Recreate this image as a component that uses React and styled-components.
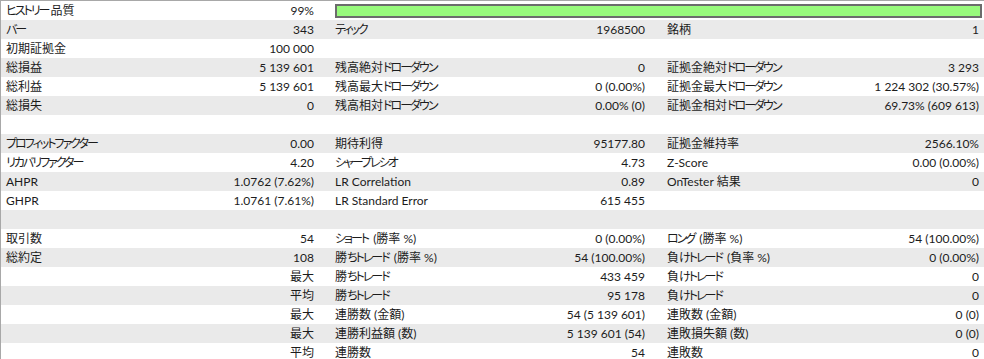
import React from 'react';
import styled, { createGlobalStyle } from 'styled-components';

const GlobalStyle = createGlobalStyle`
  html, body {
    margin: 0;
    padding: 0;
    background: #ffffff;
  }
  body {
    font-family: Lato, 'Noto Sans CJK JP', sans-serif;
    font-size: 12px;
    color: #1c1c1c;
    font-feature-settings: 'palt' 1;
  }
`;

const Table = styled.div`
  width: 984px;
  height: 359px;
  overflow: hidden;
  box-sizing: border-box;
  border-top: 1px solid #a8a8a8;
  border-left: 1px solid #a8a8a8;
`;

const Row = styled.div`
  display: grid;
  grid-template-columns: 329px 331px 323px;
  height: 19px;
  background: ${({ $shaded }) => ($shaded ? '#eaeaea' : '#ffffff')};
`;

const Cell = styled.div`
  display: flex;
  align-items: center;
  justify-content: space-between;
  padding: ${({ $last }) => ($last ? '0 5px 0 6px' : '0 16px 0 5px')};
  line-height: 19px;
  white-space: nowrap;
  min-width: 0;
`;

const Label = styled.span``;

const Kana = styled.span`
  letter-spacing: -2px;
  margin-right: 2px;
`;

const Value = styled.span`
  text-align: right;
`;

const BarCell = styled.div`
  grid-column: 2 / 4;
  display: flex;
  align-items: center;
  padding: 0 2px 0 5px;
`;

const QualityBar = styled.div`
  flex: 1;
  height: 14px;
  box-sizing: border-box;
  border: 2px solid #6c6c6c;
  background: #98fa7c;
`;

// kana in the reference font is narrower than in Noto Sans CJK, so tighten those runs
const renderText = (text) =>
  text.split(/([\u3040-\u30ff]+)/).map((part, k) =>
    /[\u3040-\u30ff]/.test(part) ? <Kana key={k}>{part}</Kana> : part
  );

const rows = [
  [['ヒストリー品質', '99%'], 'bar'],
  [['バー', '343'], ['ティック', '1968500'], ['銘柄', '1']],
  [['初期証拠金', '100 000'], ['', ''], ['', '']],
  [['総損益', '5 139 601'], ['残高絶対ドローダウン', '0'], ['証拠金絶対ドローダウン', '3 293']],
  [['総利益', '5 139 601'], ['残高最大ドローダウン', '0 (0.00%)'], ['証拠金最大ドローダウン', '1 224 302 (30.57%)']],
  [['総損失', '0'], ['残高相対ドローダウン', '0.00% (0)'], ['証拠金相対ドローダウン', '69.73% (609 613)']],
  [['', ''], ['', ''], ['', '']],
  [['プロフィットファクター', '0.00'], ['期待利得', '95177.80'], ['証拠金維持率', '2566.10%']],
  [['リカバリファクター', '4.20'], ['シャープレシオ', '4.73'], ['Z-Score', '0.00 (0.00%)']],
  [['AHPR', '1.0762 (7.62%)'], ['LR Correlation', '0.89'], ['OnTester 結果', '0']],
  [['GHPR', '1.0761 (7.61%)'], ['LR Standard Error', '615 455'], ['', '']],
  [['', ''], ['', ''], ['', '']],
  [['取引数', '54'], ['ショート (勝率 %)', '0 (0.00%)'], ['ロング (勝率 %)', '54 (100.00%)']],
  [['総約定', '108'], ['勝ちトレード (勝率 %)', '54 (100.00%)'], ['負けトレード (負率 %)', '0 (0.00%)']],
  [['', '最大'], ['勝ちトレード', '433 459'], ['負けトレード', '0']],
  [['', '平均'], ['勝ちトレード', '95 178'], ['負けトレード', '0']],
  [['', '最大'], ['連勝数 (金額)', '54 (5 139 601)'], ['連敗数 (金額)', '0 (0)']],
  [['', '最大'], ['連勝利益額 (数)', '5 139 601 (54)'], ['連敗損失額 (数)', '0 (0)']],
  [['', '平均'], ['連勝数', '54'], ['連敗数', '0']],
];

const App = () => (
  <>
    <GlobalStyle />
    <Table>
      {rows.map((row, i) => (
        <Row key={i} $shaded={i % 2 === 1}>
          {row.map((cell, j) =>
            cell === 'bar' ? (
              <BarCell key="bar">
                <QualityBar />
              </BarCell>
            ) : (
              <Cell key={j} $last={j === 2}>
                <Label>{renderText(cell[0])}</Label>
                <Value>{cell[1]}</Value>
              </Cell>
            )
          )}
        </Row>
      ))}
    </Table>
  </>
);

export default App;
